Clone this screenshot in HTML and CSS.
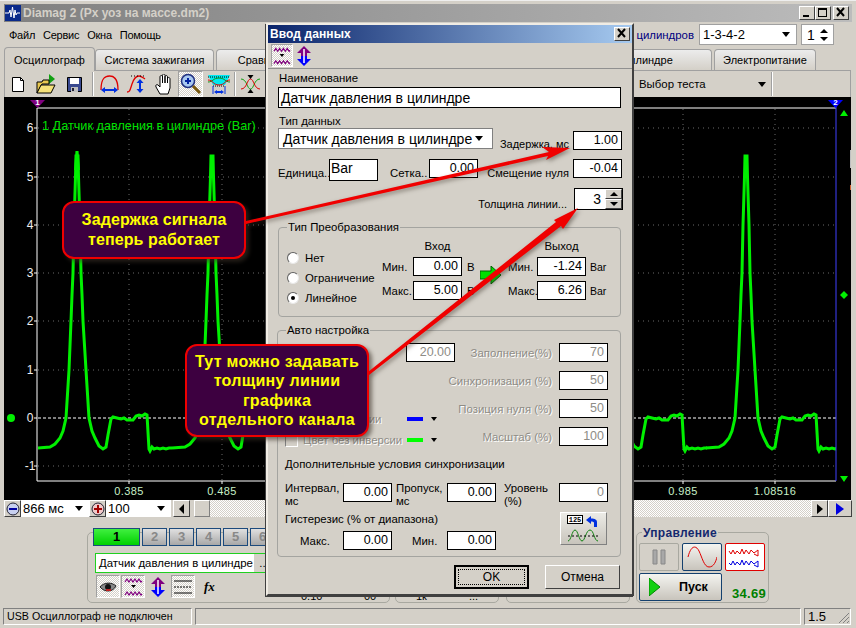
FILE: index.html
```html
<!DOCTYPE html>
<html lang="ru">
<head>
<meta charset="utf-8">
<title>Diamag 2</title>
<link rel="stylesheet" href="styles.css">
</head>
<body>
<svg class="defs" width="0" height="0">
  <defs>
    <symbol id="i-wave" viewBox="0 0 21 22">
      <path d="M2 6l2-3 2 3 2-3 2 3 2-3 2 3 2-3 2 3 1-1" fill="none" stroke="#800080" stroke-width="1.2"/>
      <path d="M2 19l2-3 2 3 2-3 2 3 2-3 2 3 2-3 2 3 1-1" fill="none" stroke="#800080" stroke-width="1.2"/>
      <path d="M8 9h5l-2.500 3z" fill="#000"/>
    </symbol>
    <symbol id="i-arrows" viewBox="0 0 16 20">
      <path d="M8 0l7 7h-4v3H5V7H1z" fill="#800080"/>
      <path d="M8 20l7-7h-4v-3H5v3H1z" fill="#0000ff"/>
      <path d="M8 3v14" stroke="#fff" stroke-width="1.500"/>
    </symbol>
  </defs>
</svg>

<div class="app">
  <header class="titlebar">
    <svg class="app-icon" width="16" height="16" viewBox="0 0 16 16"><rect width="16" height="16" fill="#0a2a8a"/><path d="M0 8h4l1-3 1 7 1.500-10 1.500 11 1-8 1 5 1-2h3" fill="none" stroke="#fff"/></svg>
    <span class="title-text">Diamag 2 (Рх уоз на массе.dm2)</span>
    <span class="win-btns">
      <span class="win-btn"><svg width="15" height="13" viewBox="0 0 15 13"><path d="M4 9h6v2H4z"/></svg></span>
      <span class="win-btn"><svg width="15" height="13" viewBox="0 0 15 13"><path d="M3 2h9v9H3zM4 4v6h7V4z" fill-rule="evenodd"/></svg></span>
      <span class="win-btn win-close"><svg width="15" height="13" viewBox="0 0 15 13"><path d="M4 2l7 8M11 2l-7 8" stroke="#000" stroke-width="2"/></svg></span>
    </span>
  </header>

  <nav class="menubar">
    <span class="menu-item">Файл</span><span class="menu-item">Сервис</span><span class="menu-item">Окна</span><span class="menu-item">Помощь</span>
    <span class="firing">Порядок работы цилиндров</span>
    <span class="combo combo-order"><span>1-3-4-2</span><i class="caret"></i></span>
    <span class="combo combo-spin"><span>1</span><span class="mini-spin"><i class="tri-up"></i><i class="tri-down"></i></span></span>
  </nav>

  <div class="tabs">
    <span class="tab tab-active">Осциллограф</span>
    <span class="tab tab-ign">Система зажигания</span>
    <span class="tab tab-cmp">Сравнение</span>
    <span class="tab tab-cyl">Давления в цилиндре</span>
    <span class="tab tab-pow">Электропитание</span>
  </div>

  <div class="toolbar">
    <svg class="tool t-new" width="14" height="15" viewBox="0 0 14 15"><path d="M1.500.500h8l3 3v11h-11z" fill="#fff" stroke="#000"/><path d="M9.500.500v3h3" fill="none" stroke="#000"/></svg>
    <svg class="tool t-open" width="20" height="20" viewBox="0 0 20 20"><path d="M13 0l6 5-6 5z" fill="#12a012"/><path d="M1 8h5l1-2h6v4H6L1 19z" fill="#e8c850" stroke="#000"/><path d="M1 19l4-8h14l-4 8z" fill="#f6e27a" stroke="#000"/></svg>
    <svg class="tool t-save" width="15" height="15" viewBox="0 0 15 15"><path d="M.500.500h14v14H.500z" fill="#3a4a90" stroke="#000"/><path d="M3 1h9v6H3z" fill="#fff"/><path d="M4 10h7v5H4z" fill="#c0c0c0"/><path d="M5 11h2v3H5z" fill="#223"/></svg>
    <i class="tool-sep t-sep1"></i>
    <svg class="tool t-arc" width="19" height="19" viewBox="0 0 19 19"><path d="M1 15C1 2 6 1 9.500 1S18 2 18 15" fill="none" stroke="#e00000" stroke-width="1.300"/><path d="M1 15l4-3v2h9v-2l4 3-4 3v-2H5v2z" fill="#0030e0"/></svg>
    <svg class="tool t-step" width="21" height="19" viewBox="0 0 21 19"><path d="M1 17c3 0 3-2 5-8s5-8 7-8 3 1 6 3" fill="none" stroke="#e00000" stroke-width="1.300"/><path d="M5 1h14" stroke="#000" stroke-dasharray="1 2"/><path d="M14 4l-3.500 4h2.500v6h-2.500l3.500 4 3.500-4h-2.500V8h2.500z" fill="#0030e0"/></svg>
    <svg class="tool t-hand" width="19" height="21" viewBox="0 0 19 21"><path d="M5 20l-4-7c-1-2 1-3 2-2l2 2V3c0-2 2.500-2 2.500 0v6V1.500c0-2 2.500-2 2.500 0V9V3c0-2 2.500-2 2.500 0v6V5c0-2 2.500-2 2.500 0v9l-2 6z" fill="#fff" stroke="#000"/></svg>
    <span class="tool-press t-zoom">
      <svg width="22" height="22" viewBox="0 0 22 22"><circle cx="8" cy="8" r="6.500" fill="#a8c8f0" stroke="#203080" stroke-width="1.500"/><path d="M5 8h6M8 5v6" stroke="#0020a0" stroke-width="2"/><path d="M13 13l7 7" stroke="#7a5a10" stroke-width="3"/></svg>
    </span>
    <svg class="tool t-cyan" width="24" height="20" viewBox="0 0 24 20"><path d="M1 1h22l-5 10H6z" fill="#00e8f0"/><path d="M1 3h22M6 12h12" stroke="#000" stroke-dasharray="1 1"/><path d="M1 8c5 0 5-4 11-4s6 4 11 4" fill="none" stroke="#109010"/><path d="M1 6c5 0 5 5 11 5s6-5 11-5" fill="none" stroke="#e00000"/><path d="M7 18l3-2v1h4v-1l3 2-3 2v-1h-4v1z" fill="#0030e0"/><path d="M6 12v8M18 12v8" stroke="#0030e0"/></svg>
    <i class="tool-sep t-sep2"></i>
    <svg class="tool t-cross" width="19" height="20" viewBox="0 0 19 20"><path d="M0 5c6 0 6 10 9.500 10S13 5 19 5" fill="none" stroke="#10a010"/><path d="M0 15c6 0 6-10 9.500-10S13 15 19 15" fill="none" stroke="#e00000"/><path d="M9.500 5l-3-4h6zM9.500 15l-3 4h6z" fill="#000"/></svg>
    <span class="test-select"><span>Выбор теста</span><i class="caret"></i></span>
    <i class="tool-sep t-sep3"></i>
  </div>

  <svg class="chart" width="847" height="403" viewBox="4 97 847 403">
    <defs>
      <clipPath id="plot"><rect x="38" y="109" width="798" height="372"/></clipPath>
      <path id="period" fill="none" d="M-40 448L-27 447-22 444-17 438-14 431-11 418-8 370-6 321-5 295-4 273-3 225-1.500 177-1 156 1 156 1.500 177 3 225 4 273 5 295 6 321 9 370 12 418 15 431 18 438 22 446 26 449 29 447 31 435 34 419 36 417 40 418 44 419 47 418 50 420 53 420 56 420 59 416 62 415 65 416 68 414 70 415 72 449 73 451 75 447 77 449 80 448 83 449 86 448 89 449 92 448 95 448"/>
    </defs>
    <g class="grid">
      <path d="M38 128H836M38 177H836M38 225H836M38 273H836M38 321H836M38 370H836M38 466H836"/>
      <path d="M129 109V481M222 109V481M683 109V481M775 109V481"/>
    </g>
    <path class="zero" d="M38 418H836"/>
    <g class="trace" clip-path="url(#plot)">
      <use href="#period" x="77"/>
      <path d="M75.500 170L77 151l1.500 19"/>
      <use href="#period" x="212"/>
      <use href="#period" x="612"/>
      <use href="#period" x="746"/>
    </g>
    <path class="axis" d="M37 108H836M37 481H836M37 108V481M34 128h3M34 177h3M34 225h3M34 273h3M34 321h3M34 370h3M34 418h3M34 466h3M129 481v3M222 481v3M683 481v3M775 481v3"/>
    <path class="axis-blue" d="M836 100V481"/>
    <path class="mark-purple" d="M30 100h15l-7.500 8z"/>
    <path class="mark-blue" d="M828 100h15l-7.500 8z"/>
    <text class="mark-num" x="37.500" y="105">1</text>
    <text class="mark-num" x="835.500" y="105">2</text>
    <path class="mark-green" d="M840 116l4-6 4 6zM840 476l4 6 4-6zM844 291l4 4-4 4-4-4z"/>
    <circle class="mark-green" cx="11" cy="418" r="4"/>
    <text class="legend" x="42" y="130">1 Датчик давления в цилиндре (Bar)</text>
    <g class="ylab">
      <text x="30" y="132">6</text><text x="30" y="181">5</text><text x="30" y="229">4</text><text x="30" y="277">3</text>
      <text x="30" y="325">2</text><text x="30" y="374">1</text><text x="30" y="422">0</text><text x="30" y="470">-1</text>
    </g>
    <g class="xlab">
      <text x="129" y="495">0.385</text><text x="222" y="495">0.485</text><text x="683" y="495">0.985</text><text x="775" y="495">1.08516</text>
    </g>
    <rect class="art-grey" x="850" y="150" width="1" height="18"/>
    <rect class="art-orange" x="850" y="185" width="1" height="5"/>
  </svg>

  <div class="scrollrow">
    <span class="sq-btn"><svg width="14" height="14" viewBox="0 0 14 14"><circle cx="7" cy="7" r="6" fill="#c8d0f0" stroke="#223"/><path d="M3 7h8" stroke="#0000a0" stroke-width="2"/></svg></span>
    <span class="scombo scombo-a"><span>866 мс</span><i class="caret"></i></span>
    <span class="sq-btn"><svg width="14" height="14" viewBox="0 0 14 14"><circle cx="7" cy="7" r="6" fill="#f0c8c8" stroke="#223"/><path d="M3 7h8M7 3v8" stroke="#a00000" stroke-width="2"/></svg></span>
    <span class="scombo scombo-b"><span>100</span><i class="caret"></i></span>
    <span class="sq-btn sq-left"><i class="tri-left"></i></span>
    <span class="thumb"></span>
    <span class="track"></span>
    <span class="sq-btn"><i class="tri-right"></i></span>
    <span class="sq-btn sq-play"><i class="tri-right tri-blue"></i></span>
  </div>

  <div class="lower">
    <section class="box box-chan">
      <div class="chan-row">
        <span class="chan chan-on">1</span><span class="chan">2</span><span class="chan">3</span><span class="chan">4</span><span class="chan">5</span><span class="chan">6</span>
      </div>
      <div class="chan-name">Датчик давления в цилиндре<span class="dots">...</span></div>
      <div class="chan-tools">
        <span class="tool-press ct"><svg width="18" height="12" viewBox="0 0 18 12"><path d="M1 6c4-5 12-5 16-1-3 6-11 7-16 1z" fill="#888" stroke="#222"/><circle cx="9" cy="6" r="3" fill="#111"/><path d="M7 9h5" stroke="#c02020" stroke-width="2"/></svg></span>
        <span class="tool-press ct"><svg width="21" height="22"><use href="#i-wave"/></svg></span>
        <svg class="ct-arrows" width="16" height="20"><use href="#i-arrows"/></svg>
        <span class="tool-press ct ct-lines"><svg width="20" height="18" viewBox="0 0 20 18"><path d="M1 3h18M1 15h18" stroke="#000"/><path d="M1 9h18" stroke="#000" stroke-dasharray="2 1"/></svg></span>
        <span class="fx">fx</span>
      </div>
      <span class="under u-a">0.10</span><span class="under u-b">00</span>
    </section>
    <section class="box box-mid"><span class="under u-c">1к</span><span class="under u-d">...</span></section>
    <section class="box box-mid2"></section>
    <section class="box box-ctl">
      <span class="box-legend">Управление</span>
      <div class="ctl-top">
        <span class="ctl-btn ctl-pause"><svg width="14" height="16" viewBox="0 0 14 16"><path d="M1 1h4v14H1zM9 1h4v14H9z" fill="#a8a8a8" stroke="#888"/></svg></span>
        <span class="ctl-btn ctl-sine"><svg width="30" height="24" viewBox="0 0 30 24"><path d="M1 12C4 0 9 0 12 6s5 16 10 16 7-6 8-10" fill="none" stroke="#e00000"/></svg></span>
        <span class="ctl-btn ctl-multi"><svg width="34" height="22" viewBox="0 0 34 22"><path d="M1 5l2 3 2-4 2 4 2-3 3 3 2-5 2 5 2-4 3 4 2-4 3 3 4-3v6l-4-2" fill="none" stroke="#e00000"/><path d="M1 17l2 2 2-4 2 4 2-3 3 3 2-5 2 5 2-4 3 4 2-4 3 3 4-3v6l-4-2" fill="none" stroke="#0000e0"/></svg></span>
      </div>
      <div class="ctl-bot">
        <span class="ctl-btn ctl-run"><svg width="12" height="18" viewBox="0 0 12 18"><path d="M0 0l11 9-11 9z" fill="#10d010" stroke="#080"/></svg><b>Пуск</b></span>
        <span class="rpm">34.69</span>
      </div>
    </section>
  </div>

  <footer class="status">
    <span class="st st-a">USB Осциллограф не подключен</span>
    <span class="st st-b"></span>
    <span class="st st-c">1.5<svg class="grip" width="12" height="12" viewBox="0 0 12 12"><path d="M11 1L1 11M11 5l-6 6M11 9l-2 2" stroke="#808080"/></svg></span>
  </footer>
</div>

<section class="dialog">
  <div class="dlg-title"><span>Ввод данных</span><span class="win-btn dlg-close"><svg width="15" height="13" viewBox="0 0 15 13"><path d="M4 2l7 8M11 2l-7 8" stroke="#000" stroke-width="2"/></svg></span></div>
  <div class="dlg-tools">
    <span class="tool-press dt"><svg width="21" height="22"><use href="#i-wave"/></svg></span>
    <svg class="dt-arrows" width="16" height="20"><use href="#i-arrows"/></svg>
  </div>
  <div class="dlg-body">
    <div class="lab lab-name">Наименование</div>
    <div class="fld fld-name">Датчик давления в цилиндре</div>
    <div class="lab lab-type">Тип данных</div>
    <div class="row row-a">
      <div class="fld-select"><span>Датчик давления в цилиндре</span><i class="caret"></i></div>
      <span class="lab-r lab-delay">Задержка, мс</span>
      <span class="fld num fld-delay">1.00</span>
    </div>
    <div class="row row-b">
      <span class="lab w-unit">Единица..</span><span class="fld fld-bar">Bar</span>
      <span class="lab w-grid">Сетка..</span><span class="fld num fld-short">0.00</span>
      <span class="lab-r w-off">Смещение нуля</span><span class="fld num fld-short fld-off">-0.04</span>
    </div>
    <div class="row row-c">
      <span class="lab-r w-thick">Толщина линии...</span>
      <span class="fld num fld-thick">3<span class="spin"><i class="spin-b"><i class="tri-up"></i></i><i class="spin-b"><i class="tri-down"></i></i></span></span>
    </div>

    <section class="group group-conv">
      <span class="g-legend">Тип Преобразования</span>
      <div class="radios">
        <div class="radio"><i class="rb"></i>Нет</div>
        <div class="radio"><i class="rb"></i>Ограничение</div>
        <div class="radio"><i class="rb rb-on"></i>Линейное</div>
      </div>
      <div class="conv-grid">
        <span></span><span class="head">Вход</span><span></span><span></span><span class="head">Выход</span><span></span>
        <span class="lab">Мин.</span><span class="fld num">0.00</span><span class="lab unit">В</span><span class="lab">Мин.</span><span class="fld num">-1.24</span><span class="lab unit ubar">Bar</span>
        <span class="lab">Макс.</span><span class="fld num">5.00</span><span class="lab unit">В</span><span class="lab">Макс.</span><span class="fld num">6.26</span><span class="lab unit ubar">Bar</span>
      </div>
      <svg class="conv-arrow" width="21" height="18" viewBox="0 0 21 18"><path d="M0 5h11V0l10 9-10 9v-5H0z" fill="#00e000" stroke="#006000"/></svg>
    </section>

    <section class="group group-auto">
      <span class="g-legend">Авто настройка</span>
      <div class="auto-top">
        <div class="auto-left">
          <div class="row auto-r1"><span class="off">Диапазон..</span><span class="fld num dis fld-short">20.00</span></div>
          <div class="row auto-r2"><i class="cb"></i><span class="off w-col">Цвет инверсии</span><i class="sw sw-blue"></i><i class="caret caret-sm"></i></div>
          <div class="row auto-r3"><i class="cb"></i><span class="off w-col">Цвет без инверсии</span><i class="sw sw-green"></i><i class="caret caret-sm"></i></div>
        </div>
        <div class="auto-right">
          <span class="off tr">Заполнение(%)</span><span class="fld num dis">70</span>
          <span class="off tr">Синхронизация (%)</span><span class="fld num dis">50</span>
          <span class="off tr">Позиция нуля (%)</span><span class="fld num dis">50</span>
          <span class="off tr">Масштаб (%)</span><span class="fld num dis">100</span>
        </div>
      </div>
      <div class="lab lab-sync">Дополнительные условия синхронизации</div>
      <div class="row row-sync">
        <span class="lab two w-int">Интервал,<br>мс</span><span class="fld num fld-short">0.00</span>
        <span class="lab two w-skip">Пропуск,<br>мс</span><span class="fld num fld-short">0.00</span>
        <span class="lab two w-lvl">Уровень<br>(%)</span><span class="fld num dis fld-short">0</span>
      </div>
      <div class="row row-hyst">
        <div class="hyst-left">
          <div class="lab lab-hyst">Гистерезис (% от диапазона)</div>
          <div class="row">
            <span class="lab w-hmax">Макс.</span><span class="fld num fld-short">0.00</span>
            <span class="lab w-hmin">Мин.</span><span class="fld num fld-short">0.00</span>
          </div>
        </div>
        <span class="btn125">
          <svg width="34" height="28" viewBox="0 0 34 28"><rect x=".5" y=".5" width="15" height="8" fill="#fff" stroke="#000"/><text class="t125" x="8" y="7">125</text><path d="M19 5l5-4v2.500c4 0 6 1 6 4V12h-3V8c0-1-1-1.500-3-1.500V9z" fill="#0030e0"/><path d="M1 26c3 0 4-11 7-11s4 11 7 11 4-11 8-11 4 11 8 11" fill="none" stroke="#108010"/><path d="M1 21h32" stroke="#000" stroke-dasharray="2 2"/></svg>
        </span>
      </div>
    </section>

    <div class="dlg-actions">
      <span class="dlg-btn dlg-ok"><span>OK</span></span>
      <span class="dlg-btn">Отмена</span>
    </div>
  </div>
</section>

<div class="callout callout-a">Задержка сигнала<br>теперь работает</div>
<div class="callout callout-b">Тут можно задавать<br>толщину линии<br>графика<br>отдельного канала</div>
<svg class="arrows" width="856" height="628" viewBox="0 0 856 628">
  <path d="M246 221L549 152l-7-5 28 1-24 12 2-4L246 224z"/>
  <path d="M368 372L556 222l-2-2 24-12-15 21-2-3L369 375z"/>
</svg>
</body>
</html>
```
FILE: styles.css
```css
* { box-sizing: border-box; }
html, body { margin: 0; padding: 0; }
body {
  width: 856px; height: 628px; overflow: hidden; position: relative;
  background: #d4d0c8; color: #000;
  font: 11.4px/14px "Liberation Sans", Arial, sans-serif;
}
i { display: block; font-style: normal; }
.defs { position: absolute; }
.app { width: 856px; height: 628px; padding: 4px 4px 3px; display: flex; flex-direction: column; border-top: 1px solid #eee; }

/* title */
.titlebar { height: 18px; margin-top: -1px; background: linear-gradient(90deg, #808080, #bcbcbc); display: flex; align-items: center; padding-left: 1px; flex: none; }
.title-text { margin-left: 2px; color: #d4d0c8; font: bold 12px "Liberation Sans", sans-serif; white-space: nowrap; }
.app-icon { flex: none; }
.win-btns { margin-left: auto; margin-right: 3px; display: flex; }
.win-btn { width: 16px; height: 14px; background: #d4d0c8; border: 1px solid; border-color: #fff #404040 #404040 #fff; display: block; overflow: hidden; }
.win-btn svg { display: block; margin: -1px 0 0 -1px; }
.win-close { margin-left: 2px; }

/* menu */
.menubar { height: 25px; display: flex; align-items: center; flex: none; padding-left: 5px; }
.menu-item { margin-right: 8px; font-size: 11px; letter-spacing: -.25px; }
.firing { margin-left: auto; color: #000080; margin-right: 5px; white-space: nowrap; }
.combo { height: 21px; background: #fff; border: 1px solid #a0a0a0; display: flex; align-items: center; justify-content: space-between; font-size: 13px; padding: 0 3px; }
.combo-order { width: 98px; margin-right: 4px; }
.combo-spin { width: 33px; margin-right: 18px; font-size: 14px; padding-left: 5px; }
.caret { width: 0; height: 0; border: 4px solid transparent; border-top: 5px solid #000; border-bottom: 0; margin-right: 3px; flex: none; }
.caret-sm { border-width: 3px; border-top-width: 4px; border-bottom: 0; margin-left: 8px; }
.mini-spin { display: flex; flex-direction: column; gap: 4px; margin-right: 2px; }
.tri-up { width: 0; height: 0; border: 4px solid transparent; border-bottom: 4px solid #000; border-top: 0; }
.tri-down { width: 0; height: 0; border: 4px solid transparent; border-top: 4px solid #000; border-bottom: 0; }
.tri-left { width: 0; height: 0; border: 5px solid transparent; border-right: 5px solid #000; border-left: 0; }
.tri-right { width: 0; height: 0; border: 5px solid transparent; border-left: 6px solid #000; border-right: 0; }
.tri-blue { border-width: 6px; border-left: 8px solid #0000e0; border-right: 0; }

/* tabs */
.tabs { height: 23px; display: flex; align-items: flex-end; flex: none; padding-right: 36px; position: relative; }
.tab { height: 21px; border: 1px solid #a0a0a0; border-bottom: 0; border-radius: 4px 4px 0 0; background: linear-gradient(#ececec, #d4d0c8); display: flex; align-items: center; justify-content: center; font-size: 11px; margin-right: 2px; flex: none; white-space: nowrap; }
.tab-active { height: 24px; width: 91px; background: #d4d0c8; margin-right: 0; margin-bottom: -1px; position: relative; }
.tab-ign { width: 119px; }
.tab-cmp { width: 100px; }
.tab-cyl { width: 190px; margin-left: auto; }
.tab-pow { width: 102px; margin-right: 0; }

/* toolbar */
.toolbar { height: 27px; display: flex; align-items: center; flex: none; border: 1px solid #a0a0a0; border-bottom: 0; width: 847px; }
.tool { flex: none; }
.t-new { margin-left: 6px; }
.t-open { margin-left: 11px; }
.t-save { margin-left: 11px; }
.tool-sep { width: 2px; height: 24px; background: #fff; border-left: 1px solid #a0a0a0; flex: none; }
.t-sep1 { margin-left: 10px; }
.t-arc { margin-left: 6px; }
.t-step { margin-left: 7px; }
.t-hand { margin-left: 8px; }
.tool-press { display: flex; align-items: center; justify-content: center; flex: none; background: repeating-conic-gradient(#fff 0 25%, #d4d0c8 0 50%) 0 0/2px 2px; border: 1px solid; border-color: #a0a0a0 #fff #fff #a0a0a0; }
.t-zoom { width: 25px; height: 26px; margin-left: 4px; }
.t-cyan { margin-left: 4px; }
.t-sep2 { margin-left: 3px; }
.t-cross { margin-left: 5px; }
.test-select { width: 130px; margin-left: 379px; display: flex; justify-content: space-between; align-items: center; flex: none; }
.t-sep3 { margin-left: 2px; }

/* chart */
.chart { display: block; flex: none; background: #000; }
.grid path { fill: none; stroke: #6a6a6a; stroke-dasharray: 1 4; }
.zero { stroke: #fff; stroke-dasharray: 3 2; }
.trace { fill: none; stroke: #00f000; stroke-width: 3; }
.axis { fill: none; stroke: #fff; }
.axis-blue { stroke: #4040ff; stroke-width: 1; }
.mark-purple { fill: #800080; }
.mark-blue { fill: #0000ff; }
.mark-green { fill: #00f000; }
.mark-num { fill: #fff; font: bold 8px "Liberation Sans", sans-serif; text-anchor: middle; }
.legend { fill: #00e000; font: 12.7px "Liberation Sans", sans-serif; }
.ylab text { fill: #f0f0f0; font: 12px "Liberation Sans", sans-serif; text-anchor: middle; }
.xlab text { fill: #c8f0c8; font: 11px "Liberation Sans", sans-serif; text-anchor: middle; letter-spacing: .4px; }
.art-grey { fill: #c0c0c0; }
.art-orange { fill: #d06030; }

/* scroll row */
.scrollrow { height: 17px; display: flex; flex: none; }
.sq-btn { width: 17px; height: 17px; flex: none; background: #d4d0c8; border: 1px solid; border-color: #fff #404040 #404040 #fff; display: flex; align-items: center; justify-content: center; }
.scombo { height: 17px; background: #fff; display: flex; align-items: center; justify-content: space-between; padding: 0 3px 0 2px; font-size: 13px; flex: none; }
.scombo-a { width: 68px; }
.scombo-b { width: 65px; }
.sq-left { margin-left: 2px; }
.thumb { width: 16px; height: 17px; margin-left: 4px; background: #d4d0c8; border: 1px solid; border-color: #fff #808080 #808080 #fff; flex: none; }
.track { flex: 1; background: repeating-conic-gradient(#fff 0 25%, #d4d0c8 0 50%) 0 0/2px 2px; }
.sq-play { width: 24px; }

/* lower panel */
.lower { height: 90px; display: flex; flex: none; padding-left: 83px; padding-top: 15px; }
.box { border: 1px solid #a8a8a0; border-radius: 5px; height: 71px; position: relative; flex: none; }
.box-chan { width: 303px; }
.box-mid { width: 104px; margin-left: 5px; }
.box-mid2 { width: 124px; margin-left: 7px; }
.box-ctl { width: 133px; margin-left: 6px; }
.chan-row { display: flex; gap: 2px; margin: -5px 0 0 5px; }
.chan { width: 25px; height: 18px; border: 1px solid #1c4a7c; background: linear-gradient(#e0e0e0, #a8a8a8); color: #888; font-weight: bold; font-size: 13px; text-align: center; line-height: 16px; }
.chan-on { width: 47px; background: linear-gradient(#40f040, #00d000); color: #000; }
.chan-name { width: 260px; height: 20px; margin: 7px 0 0 7px; background: #fff; border: 1px solid #20d020; font-size: 11.4px; line-height: 18px; padding-left: 3px; position: relative; white-space: nowrap; }
.dots { position: absolute; left: 158px; top: 0; width: 20px; height: 18px; background: #d4d0c8; text-align: center; }
.chan-tools { display: flex; align-items: center; margin: 2px 0 0 8px; }
.ct { width: 24px; height: 23px; margin-right: 1px; }
.ct-arrows { margin: 0 4px; }
.ct-lines { margin-left: 1px; }
.fx { margin-left: 8px; font: italic bold 13px "Liberation Serif", serif; }
.under { position: absolute; top: 57px; font-size: 11px; line-height: 12px; }
.u-a { left: 213px; }
.u-b { left: 276px; }
.u-c { left: 20px; }
.u-d { left: 73px; }
.box-legend { position: absolute; left: 5px; top: -6px; padding: 0 1px; background: #d4d0c8; color: #14286e; font-weight: bold; font-size: 12px; line-height: 12px; letter-spacing: .3px; }
.ctl-top { display: flex; gap: 3px; margin: 10px 0 0 2px; }
.ctl-btn { height: 28px; width: 40px; display: flex; align-items: center; justify-content: center; border: 1px solid #14406e; border-radius: 2px; background: linear-gradient(#f4f4f0, #c8c4bc); }
.ctl-pause { background: #d4d0c8; border-color: #a8a8a0; }
.ctl-multi { background: #fff; border-color: #e00000; }
.ctl-bot { display: flex; margin: 2px 0 0 2px; align-items: flex-end; }
.ctl-run { width: 83px; justify-content: flex-start; padding-left: 9px; }
.ctl-run b { margin-left: 18px; font-size: 12.5px; }
.rpm { margin-left: 10px; color: #008000; font: bold 13px "Liberation Sans", sans-serif; letter-spacing: .3px; }

/* status */
.status { height: 18px; display: flex; gap: 3px; flex: none; margin-left: -1px; padding-top: 1px; }
.st { border: 1px solid; border-color: #808080 #fff #fff #808080; height: 17px; line-height: 15px; padding-left: 3px; flex: none; position: relative; white-space: nowrap; font-size: 10.7px; }
.st-a { width: 189px; }
.st-b { width: 606px; }
.st-c { width: 47px; font-size: 13px; }
.grip { position: absolute; right: 0; bottom: 0; }

/* dialog */
.dialog { position: absolute; left: 266px; top: 23px; width: 368px; height: 573px; background: #d4d0c8; border: 2px solid; border-color: #f0ece4 #404040 #404040 #f0ece4; box-shadow: -1px 1px 0 #404040; }
.dlg-title { height: 18px; background: linear-gradient(90deg, #0a246a, #a6caf0); color: #fff; font-weight: bold; font-size: 12px; display: flex; align-items: center; justify-content: space-between; padding-left: 2px; padding-right: 2px; letter-spacing: .1px; }
.dlg-tools { height: 26px; border-bottom: 1px solid #909090; display: flex; align-items: center; padding-left: 3px; }
.dt { width: 22px; height: 23px; }
.dt-arrows { margin-left: 3px; }
.dlg-body { padding-left: 10px; }
.lab { white-space: nowrap; }
.lab-name { height: 18px; line-height: 18px; padding-left: 1px; }
.lab-type { height: 20px; line-height: 26px; padding-left: 1px; }
.fld { display: block; background: #fff; border: 1px solid #000; flex: none; font-size: 14px; line-height: 17px; padding: 0 2px; height: 19px; overflow: hidden; position: relative; white-space: nowrap; }
.num { text-align: right; font-size: 12.5px; padding-right: 3px; }
.fld-name { width: 343px; height: 21px; line-height: 20px; }
.row { display: flex; align-items: center; }
.row-a { height: 31px; align-items: flex-start; }
.fld-select { width: 215px; height: 21px; background: #fff; border: 1px solid #808080; display: flex; align-items: center; justify-content: space-between; padding: 0 6px 0 4px; font-size: 14px; white-space: nowrap; flex: none; }
.lab-r { display: flex; justify-content: flex-end; white-space: nowrap; flex: none; font-size: 11px; }
.lab-delay { width: 76px; margin-top: 9px; }
.fld-delay { width: 49px; margin: 3px 0 0 4px; }
.row-b { height: 22px; align-items: flex-start; }
.w-unit { width: 51px; margin-top: 7px; }
.fld-bar { width: 49px; height: 22px; line-height: 17px; padding-left: 1px; }
.w-grid { width: 51px; margin-top: 7px; padding-left: 12px; }
.fld-short { width: 49px; }
.w-off { width: 91px; margin-top: 7px; }
.fld-off { margin-left: 4px; }
.row-c { height: 22px; margin-top: 7px; padding-left: 180px; }
.w-thick { width: 109px; margin-top: 9px; }
.fld-thick { width: 49px; height: 22px; margin-left: 7px; padding-right: 21px; font-size: 14px; line-height: 20px; }
.spin { position: absolute; right: 0; top: 0; width: 17px; height: 20px; display: flex; flex-direction: column; }
.spin-b { height: 10px; background: #d4d0c8; border: 1px solid; border-color: #fff #404040 #404040 #fff; display: flex; align-items: center; justify-content: center; }

.group { border: 1px solid #a4a4a0; border-radius: 4px; position: relative; width: 343px; }
.g-legend { position: absolute; left: 8px; top: -7px; background: #d4d0c8; padding: 0 1px; line-height: 13px; }
.group-conv { height: 90px; margin-top: 17px; display: flex; }
.radios { width: 103px; padding: 20px 0 0 8px; flex: none; }
.radio { height: 20px; display: flex; align-items: center; }
.rb { width: 12px; height: 12px; border-radius: 50%; background: #fff; border: 1px solid; border-color: #606060 #e8e8e8 #e8e8e8 #606060; margin-right: 6px; position: relative; }
.rb-on::after { content: ""; position: absolute; left: 3px; top: 3px; width: 4px; height: 4px; border-radius: 50%; background: #000; }
.conv-grid { display: grid; grid-template-columns: 31px 49px 46px 29px 49px 20px; grid-template-rows: 13px 19px 19px; row-gap: 5px; padding-top: 11px; align-items: center; height: 70px; }
.conv-grid .fld { height: 19px; }
.head { text-align: center; }
.unit { padding-left: 5px; }
.ubar { font-size: 10.5px; padding-left: 4px; }
.conv-arrow { position: absolute; left: 201px; top: 38px; }

.group-auto { height: 227px; margin-top: 13px; left: -1px; width: 344px; padding: 12px 0 0 7px; }
.auto-top { display: flex; height: 103px; }
.auto-left { width: 170px; flex: none; }
.auto-r1 { justify-content: space-between; height: 19px; }
.auto-r2 { height: 20px; margin-top: 47px; }
.auto-r3 { height: 20px; margin-top: 1px; }
.off { color: #8e8c86; text-shadow: 1px 1px 0 #fff; white-space: nowrap; }
.w-col { width: 104px; flex: none; }
.dis { color: #8e8c86; border-color: #000; }
.cb { width: 13px; height: 13px; border: 1px solid; border-color: #808080 #fff #fff #808080; margin-right: 5px; flex: none; }
.sw { width: 16px; height: 4px; flex: none; }
.sw-blue { background: #0000ff; }
.sw-green { background: #00ff00; }
.auto-right { display: grid; grid-template-columns: 97px 49px; column-gap: 7px; row-gap: 9px; grid-auto-rows: 19px; align-items: center; }
.tr { justify-self: end; }
.lab-sync { height: 16px; line-height: 16px; margin-top: 10px; }
.row-sync { margin-top: 11px; height: 19px; align-items: flex-start; }
.two { line-height: 13px; height: 26px; margin-top: -1px; }
.w-int { width: 58px; }
.w-skip { width: 55px; padding-left: 4px; }
.w-lvl { width: 63px; padding-left: 8px; }
.row-hyst { align-items: flex-start; margin-top: 10px; }
.hyst-left { width: 275px; flex: none; }
.lab-hyst { height: 19px; line-height: 15px; }
.w-hmax { width: 58px; padding-left: 15px; }
.w-hmin { width: 55px; padding-left: 20px; }
.btn125 { width: 47px; height: 33px; display: flex; align-items: center; justify-content: center; border: 1px solid; border-color: #fff #808080 #808080 #fff; background: linear-gradient(#ecebe6, #c8c4bc); }
.t125 { font: bold 7px "Liberation Mono", monospace; text-anchor: middle; }

.dlg-actions { display: flex; gap: 16px; margin: 8px 0 0 176px; }
.dlg-btn { width: 75px; height: 24px; display: flex; align-items: center; justify-content: center; border: 1px solid; border-color: #fff #404040 #404040 #fff; background: #d4d0c8; font-size: 12px; flex: none; }
.dlg-ok { border: 2px solid #000; padding: 2px; }
.dlg-ok span { width: 100%; height: 100%; display: flex; align-items: center; justify-content: center; border: 1px dotted #000; }

/* callouts and arrows */
.callout { position: absolute; background: #3d0040; border: 2px solid #f00000; border-radius: 12px; color: #ffff00; font: bold 16px/20px "Liberation Sans", sans-serif; text-align: center; box-shadow: 3px 3px 4px rgba(60,50,40,.6); display: flex; align-items: center; justify-content: center; }
.callout-a { left: 62px; top: 201px; width: 184px; height: 58px; letter-spacing: .1px; }
.callout-b { left: 185px; top: 344px; width: 184px; height: 93px; letter-spacing: .3px; line-height: 19.5px; }
.arrows { position: absolute; left: 0; top: 0; pointer-events: none; filter: drop-shadow(2px 2px 2px rgba(60,50,40,.5)); }
.arrows path { fill: #f00000; }
```
